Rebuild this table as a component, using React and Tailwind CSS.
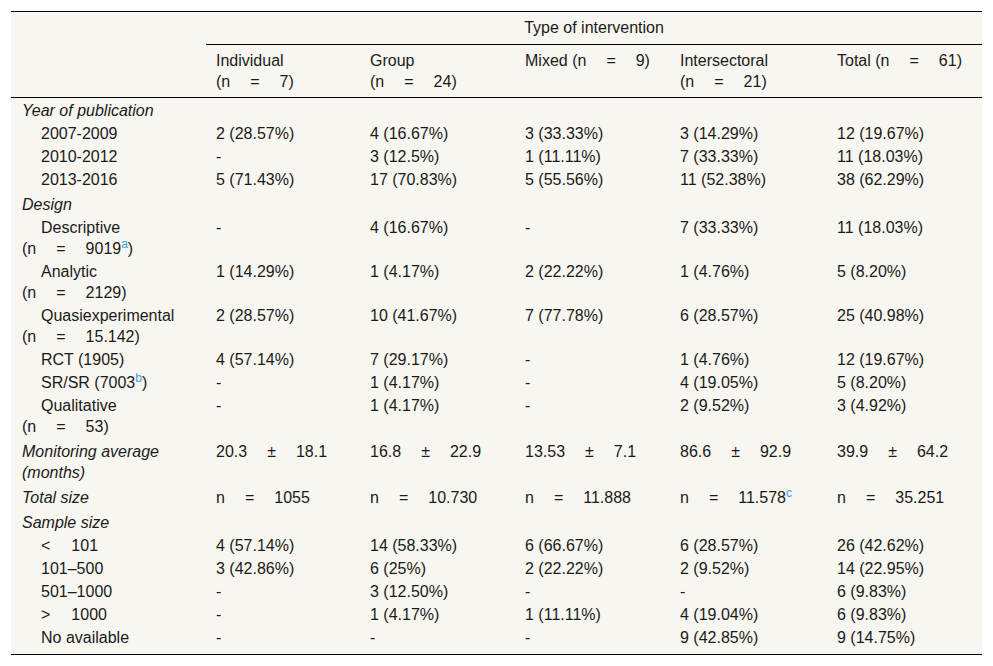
import React from "react";

const Eq = ({ a, b, sym = "=" }) => (
  <span className="whitespace-nowrap">
    {a}
    <span className="px-[20px]">{sym}</span>
    {b}
  </span>
);

const Cmp = ({ sym, val }) => (
  <span className="whitespace-nowrap">
    {sym}
    <span className="pl-[21px]">{val}</span>
  </span>
);

const Sup = ({ children }) => (
  <sup className="text-[12px] text-[#3b9ee0]">{children}</sup>
);

const rows = [
  { head: "Year of publication", first: true },
  { label: "2007-2009", cells: ["2 (28.57%)", "4 (16.67%)", "3 (33.33%)", "3 (14.29%)", "12 (19.67%)"] },
  { label: "2010-2012", cells: ["-", "3 (12.5%)", "1 (11.11%)", "7 (33.33%)", "11 (18.03%)"] },
  { label: "2013-2016", cells: ["5 (71.43%)", "17 (70.83%)", "5 (55.56%)", "11 (52.38%)", "38 (62.29%)"] },
  { head: "Design" },
  {
    label: <>Descriptive <Eq a="(n" b={<>9019<Sup>a</Sup>)</>} /></>,
    cells: ["-", "4 (16.67%)", "-", "7 (33.33%)", "11 (18.03%)"],
  },
  {
    label: <>Analytic <Eq a="(n" b="2129)" /></>,
    cells: ["1 (14.29%)", "1 (4.17%)", "2 (22.22%)", "1 (4.76%)", "5 (8.20%)"],
  },
  {
    label: <>Quasiexperimental <Eq a="(n" b="15.142)" /></>,
    cells: ["2 (28.57%)", "10 (41.67%)", "7 (77.78%)", "6 (28.57%)", "25 (40.98%)"],
  },
  { label: "RCT (1905)", cells: ["4 (57.14%)", "7 (29.17%)", "-", "1 (4.76%)", "12 (19.67%)"] },
  { label: <>SR/SR (7003<Sup>b</Sup>)</>, cells: ["-", "1 (4.17%)", "-", "4 (19.05%)", "5 (8.20%)"] },
  {
    label: <>Qualitative <Eq a="(n" b="53)" /></>,
    cells: ["-", "1 (4.17%)", "-", "2 (9.52%)", "3 (4.92%)"],
  },
  {
    head: "Monitoring average (months)",
    cells: [
      <Eq a="20.3" b="18.1" sym="±" />,
      <Eq a="16.8" b="22.9" sym="±" />,
      <Eq a="13.53" b="7.1" sym="±" />,
      <Eq a="86.6" b="92.9" sym="±" />,
      <Eq a="39.9" b="64.2" sym="±" />,
    ],
  },
  {
    head: "Total size",
    cells: [
      <Eq a="n" b="1055" />,
      <Eq a="n" b="10.730" />,
      <Eq a="n" b="11.888" />,
      <Eq a="n" b={<>11.578<Sup>c</Sup></>} />,
      <Eq a="n" b="35.251" />,
    ],
  },
  { head: "Sample size" },
  {
    label: <Cmp sym="<" val="101" />,
    cells: ["4 (57.14%)", "14 (58.33%)", "6 (66.67%)", "6 (28.57%)", "26 (42.62%)"],
  },
  { label: "101–500", cells: ["3 (42.86%)", "6 (25%)", "2 (22.22%)", "2 (9.52%)", "14 (22.95%)"] },
  { label: "501–1000", cells: ["-", "3 (12.50%)", "-", "-", "6 (9.83%)"] },
  {
    label: <Cmp sym=">" val="1000" />,
    cells: ["-", "1 (4.17%)", "1 (11.11%)", "4 (19.04%)", "6 (9.83%)"],
  },
  { label: "No available", cells: ["-", "-", "-", "9 (42.85%)", "9 (14.75%)"], last: true },
];

export default function App() {
  return (
    <div className="min-h-screen bg-white pt-[11px] pl-[11px] font-['Liberation_Sans',Arial,sans-serif] text-[16px] leading-[21px] text-[#1a1a1a]">
      <table className="w-[971px] table-fixed border-separate border-spacing-0 border-y border-black bg-[#f8f6f0]">
        <colgroup>
          <col className="w-[195px]" />
          <col className="w-[154px]" />
          <col className="w-[155px]" />
          <col className="w-[155px]" />
          <col className="w-[157px]" />
          <col className="w-[155px]" />
        </colgroup>
        <thead>
          <tr>
            <th rowSpan={2} className="border-b border-black font-normal" />
            <th colSpan={5} className="border-b border-black pt-[5px] pb-[6px] text-center font-normal">
              Type of intervention
            </th>
          </tr>
          <tr>
            {[
              ["Individual", "7)"],
              ["Group", "24)"],
              ["Mixed", "9)"],
              ["Intersectoral", "21)"],
              ["Total", "61)"],
            ].map(([name, n]) => (
              <th key={name} className="border-b border-black pt-[5px] pb-[5px] pl-[10px] pr-[14px] text-left align-top font-normal">
                {name} <Eq a="(n" b={n} />
              </th>
            ))}
          </tr>
        </thead>
        <tbody>
          {rows.map((r, i) => {
            const pad = r.head
              ? r.first
                ? "pt-[2px] pb-px"
                : "pt-[3px] pb-px"
              : r.last
              ? "pt-px pb-[6px]"
              : "py-px";
            return (
              <tr key={i}>
                {r.head ? (
                  <td className={`${pad} pl-[11px] pr-[10px] align-top italic`}>{r.head}</td>
                ) : (
                  <td className={`${pad} pl-[11px] pr-[10px] indent-[19px] align-top`}>{r.label}</td>
                )}
                {(r.cells || ["", "", "", "", ""]).map((c, j) => (
                  <td key={j} className={`${pad} pl-[10px] pr-[6px] align-top`}>
                    {c}
                  </td>
                ))}
              </tr>
            );
          })}
        </tbody>
      </table>
    </div>
  );
}
